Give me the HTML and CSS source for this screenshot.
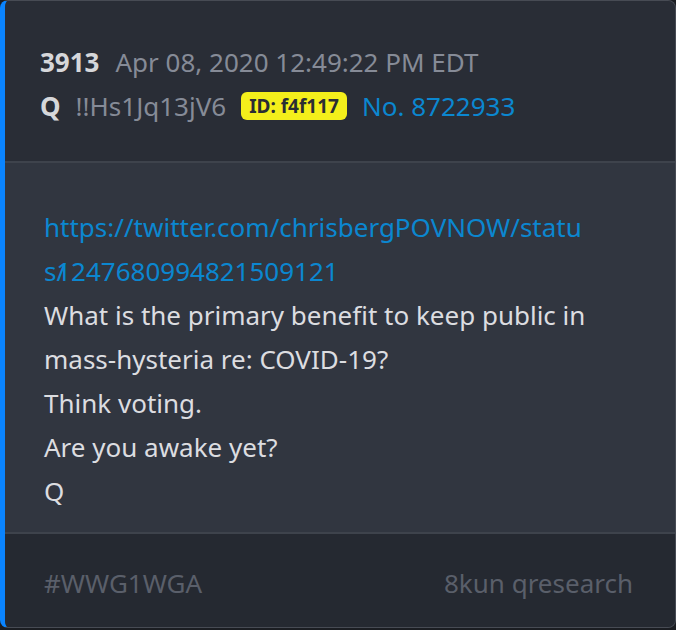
FILE: index.html
```html
<!DOCTYPE html>
<html>
<head>
<meta charset="utf-8">
<link rel="stylesheet" href="styles.css">
</head>
<body>
<article class="post">
  <header class="post-head">
    <div class="row">
      <span class="num">3913</span>
      <span class="date">Apr 08, 2020 12:49:22 PM EDT</span>
    </div>
    <div class="row">
      <span class="name">Q</span>
      <span class="trip">!!Hs1Jq13jV6</span>
      <span class="badge">ID: f4f117</span>
      <span class="no">No. 8722933</span>
    </div>
  </header>
  <div class="post-body">
    <div class="link">https://twitter.com/chrisbergPOVNOW/statu<wbr>s<span class="slash">/</span>1247680994821509121</div>
    <div>What is the primary benefit to keep public in mass-hysteria re: COVID-19?</div>
    <div>Think voting.</div>
    <div>Are you awake yet?</div>
    <div>Q</div>
  </div>
  <footer class="post-foot">
    <span>#WWG1WGA</span>
    <span>8kun qresearch</span>
  </footer>
</article>
</body>
</html>
```

FILE: styles.css
```css
html, body {
  margin: 0;
  padding: 0;
  background: #1b1d22;
}
body {
  font-family: "Noto Sans", "Open Sans", sans-serif;
  font-size: 26px;
  line-height: 44px;
}
.post {
  width: 676px;
  box-sizing: border-box;
  border: 1px solid #474b54;
  border-left: 5px solid #0a84ff;
  border-radius: 8px;
  overflow: hidden;
  background: #313640;
}
.post-head {
  background: #292d36;
  padding: 39px 20px 33px 35px;
  border-bottom: 2px solid #3e434c;
}
.row {
  display: flex;
  align-items: center;
}
.num {
  font-weight: 700;
  color: #d6d7da;
  margin-right: 16px;
}
.date {
  color: #868b97;
}
.name {
  font-weight: 700;
  color: #d6d7da;
  margin-right: 15px;
}
.trip {
  color: #868b97;
  margin-right: 15px;
}
.badge {
  background: #f4ef1b;
  color: #2a2d34;
  font-weight: 700;
  font-size: 19px;
  line-height: 28px;
  padding: 0 8px;
  border-radius: 6px;
  margin-right: 15px;
}
.no {
  color: #0b87d0;
}
.post-body {
  padding: 42px 86px 19px 39px;
  color: #dcdde0;
}
.link {
  color: #0b87d0;
  word-break: break-all;
}
.slash {
  margin-right: -10px;
}
.post-foot {
  background: #252931;
  border-top: 2px solid #3e434c;
  padding: 27px 42px 22px 39px;
  display: flex;
  justify-content: space-between;
  color: #5a5f6a;
}
```
